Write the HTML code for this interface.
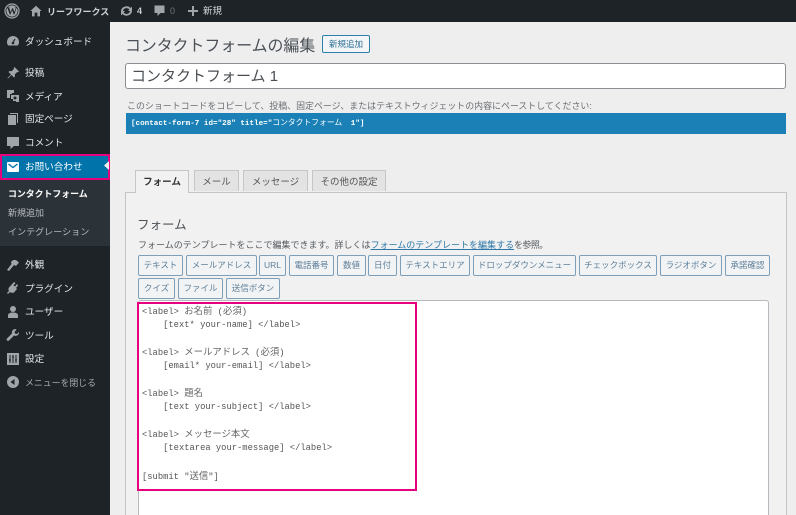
<!DOCTYPE html>
<html lang="ja">
<head>
<meta charset="utf-8">
<title>コンタクトフォームの編集</title>
<style>
html,body{margin:0;padding:0;width:796px;height:515px;overflow:hidden;background:#eeeeee;}
body{position:relative;font-family:"Liberation Sans","Noto Sans CJK JP",sans-serif;color:#444;}
#w{position:absolute;left:0;top:0;width:796px;height:515px;overflow:hidden;filter:blur(.3px);}
.a{position:absolute;white-space:nowrap;}
.m{position:absolute;left:25px;font-size:9.600px;line-height:14px;color:#e4e6e7;white-space:nowrap;}
.i{position:absolute;left:6px;width:14px;height:14px;}
.b{position:absolute;height:19px;border:1px solid #7d9fba;border-radius:2px;background:#f1f3f5;color:#5f7f99;font-size:8.500px;line-height:19px;text-align:center;white-space:nowrap;box-sizing:content-box;}
.t{position:absolute;top:170px;height:20px;border:1px solid #c6c6c6;border-bottom:none;background:#e3e3e3;color:#555;font-size:9.500px;line-height:23px;text-align:center;white-space:nowrap;}
.c{position:absolute;left:142px;font-family:"Liberation Mono","Noto Sans CJK JP",monospace;font-size:8.800px;line-height:14px;color:#555;white-space:pre;}
.c span{font-family:"Liberation Sans","Noto Sans CJK JP",sans-serif;font-size:9.400px;color:#666;}
</style>
</head>
<body>
<div id="w">
<!-- admin bar -->
<div class="a" style="left:0;top:0;width:796px;height:22px;background:#1d2327;"></div>
<svg class="a" style="left:4px;top:3px;" width="16" height="16" viewBox="0 0 16 16"><circle cx="8" cy="8" r="7" fill="none" stroke="#a0a5aa" stroke-width="1.200"/><circle cx="8" cy="8" r="5.600" fill="#a0a5aa"/><text x="8" y="11.600" text-anchor="middle" font-family="Liberation Serif" font-size="10.500" font-weight="700" fill="#1d2327">W</text></svg>
<svg class="a" style="left:30px;top:5px;" width="12" height="12" viewBox="0 0 12 12"><path d="M6 .8 11.600 6H10v5.400H7.400V7.600H4.600v3.800H2V6H.4z" fill="#a0a5aa"/></svg>
<div class="a" style="left:47px;top:5px;font-size:9px;line-height:14px;font-weight:700;color:#cfd2d4;">リーフワークス</div>
<svg class="a" style="left:120px;top:5px;" width="13" height="12" viewBox="0 0 13 12"><path d="M1 6a5.500 5 0 0 1 9.600-3L12 1.600V6H8l1.400-1.600A3.600 3.400 0 0 0 3 6zM12 6a5.500 5 0 0 1-9.600 3L1 10.400V6h4L3.600 7.600A3.600 3.400 0 0 0 10 6z" fill="#a0a5aa"/></svg>
<div class="a" style="left:137px;top:4px;font-size:9px;line-height:14px;font-weight:700;color:#c9cdd0;">4</div>
<svg class="a" style="left:154px;top:5px;" width="11" height="12" viewBox="0 0 11 12"><path d="M.5.5h10v7.500H6.500L3.500 11V8H.5z" fill="#a0a5aa"/></svg>
<div class="a" style="left:170px;top:4px;font-size:9px;line-height:14px;color:#6f7579;">0</div>
<svg class="a" style="left:188px;top:6px;" width="10" height="10" viewBox="0 0 10 10"><path d="M4 0h2v4h4v2H6v4H4V6H0V4h4z" fill="#a0a5aa"/></svg>
<div class="a" style="left:203px;top:5px;font-size:9.500px;line-height:13px;color:#cfd2d4;">新規</div>

<!-- sidebar -->
<div class="a" style="left:0;top:22px;width:110px;height:493px;background:#1d2327;"></div>
<div class="a" style="left:0;top:179px;width:110px;height:67px;background:#2c3338;"></div>
<div class="a" style="left:0;top:154px;width:110px;height:26px;background:#e6007e;"></div>
<div class="a" style="left:2px;top:156px;width:106px;height:22px;background:#0073aa;"></div>
<svg class="a" style="left:104px;top:161px;" width="5" height="9" viewBox="0 0 5 9"><path d="M5 0v9L0 4.500z" fill="#f0f0f1"/></svg>

<svg class="i" style="top:34px;" viewBox="0 0 14 14"><path d="M7 2a6 6 0 0 0-6 6c0 1.400.4 2.600 1.200 3.500h9.600A5.800 5.800 0 0 0 13 8a6 6 0 0 0-6-6z" fill="#a0a5aa"/><path d="M7 8.500 9 5" stroke="#1d2327" stroke-width="1.200"/><circle cx="7" cy="9" r="1.300" fill="#1d2327"/></svg>
<div class="m" style="top:36px;">ダッシュボード</div>
<svg class="i" style="top:66px;" viewBox="0 0 14 14"><path d="M8.500 1 13 5.500l-1 .8-.8-.3-2.400 2.400.2 2.100-1 1L5.500 9 2 12.500 1.500 12 5 8.500 2.500 6l1-1 2.100.2L8 2.800l-.3-.8z" fill="#a0a5aa"/></svg>
<div class="m" style="top:67px;">投稿</div>
<svg class="i" style="top:89px;" viewBox="0 0 14 14"><path d="M1 1h7v3H6v1H4v4H1zM5 6h8v7h-3v-1H7v-2H5z" fill="#a0a5aa"/><circle cx="9" cy="9" r="1.500" fill="#1d2327"/></svg>
<div class="m" style="top:91px;">メディア</div>
<svg class="i" style="top:112px;" viewBox="0 0 14 14"><path d="M4 1h8v10h-1V2H4z" fill="#a0a5aa"/><path d="M2 3h8v10H2z" fill="#a0a5aa"/></svg>
<div class="m" style="top:113px;">固定ページ</div>
<svg class="i" style="top:136px;" viewBox="0 0 14 14"><path d="M1 1h12v9H8l-3.500 3v-3H1z" fill="#a0a5aa"/></svg>
<div class="m" style="top:137px;">コメント</div>
<svg class="a" style="left:7px;top:162px;" width="12" height="10" viewBox="0 0 12 10"><rect x="0" y="0" width="12" height="10" rx="1" fill="#fff"/><path d="M1.500 2 6 5.500 10.500 2" fill="none" stroke="#0073aa" stroke-width="1.300"/></svg>
<div class="m" style="top:161px;color:#fff;">お問い合わせ</div>
<div class="m" style="left:8px;top:187px;font-size:8.900px;font-weight:700;color:#fff;">コンタクトフォーム</div>
<div class="m" style="left:8px;top:206px;font-size:9px;color:#b4b9be;">新規追加</div>
<div class="m" style="left:8px;top:225px;font-size:9.050px;color:#b4b9be;">インテグレーション</div>
<svg class="i" style="top:258px;" viewBox="0 0 14 14"><path d="M7 2h3l3 2.500L10 8 8 7 3 13l-2-1 4.500-6L5 4z" fill="#a0a5aa"/></svg>
<div class="m" style="top:259px;">外観</div>
<svg class="i" style="top:281px;" viewBox="0 0 14 14"><path d="M8 1l1.500 1-2 2.500 1.500 1L11 3l1 1.500L10 7l1 1-3 3.500c-1.500.7-3 .3-4-.5L2 13l-1-1 2-2c-.8-1-.8-2.500 0-3.500z" fill="#a0a5aa"/></svg>
<div class="m" style="top:283px;">プラグイン</div>
<svg class="i" style="top:305px;" viewBox="0 0 14 14"><circle cx="7" cy="4" r="3" fill="#a0a5aa"/><path d="M2 13v-2.500C2 8.500 4 7.500 7 7.500s5 1 5 3V13z" fill="#a0a5aa"/></svg>
<div class="m" style="top:306px;">ユーザー</div>
<svg class="i" style="top:328px;" viewBox="0 0 14 14"><path d="M9.500 1A3.500 3.500 0 0 0 6 5.500L1 10.500c-.6.800-.5 1.500 0 2s1.300.6 2 0l5-5A3.500 3.500 0 0 0 13 4l-2.200 2-1.800-.5L8.500 4l2-2.500z" fill="#a0a5aa"/></svg>
<div class="m" style="top:330px;">ツール</div>
<svg class="i" style="top:352px;" viewBox="0 0 14 14"><rect x="1" y="1" width="12" height="12" fill="#a0a5aa"/><path d="M4 3v8M3 8h2M7 3v8M6 5h2M10 3v8M9 8h2" stroke="#1d2327" stroke-width="1"/></svg>
<div class="m" style="top:353px;">設定</div>
<svg class="i" style="top:375px;" viewBox="0 0 14 14"><circle cx="7" cy="7" r="6" fill="#a0a5aa"/><path d="M8.500 4v6L4.500 7z" fill="#1d2327"/></svg>
<div class="m" style="top:376px;font-size:8.900px;color:#a7abaf;">メニューを閉じる</div>

<!-- heading -->
<div class="a" style="left:125px;top:36px;font-size:15.900px;line-height:22px;color:#4a5056;">コンタクトフォームの編集</div>
<div class="a" style="left:322px;top:35px;width:46px;height:16px;border:1px solid #2f7fab;border-radius:2px;background:#f3f5f6;color:#2a6f98;font-size:8.500px;line-height:17px;text-align:center;">新規追加</div>

<!-- title input -->
<div class="a" style="left:125px;top:63px;width:659px;height:24px;border:1px solid #8c8f94;border-radius:3px;background:#fff;"></div>
<div class="a" style="left:131px;top:66px;font-size:15px;line-height:22px;color:#4b4f54;">コンタクトフォーム 1</div>

<!-- shortcode -->
<div class="a" style="left:127px;top:99px;font-size:8.950px;line-height:14px;color:#6a6f74;">このショートコードをコピーして、投稿、固定ページ、またはテキストウィジェットの内容にペーストしてください:</div>
<div class="a" style="left:126px;top:113px;width:660px;height:21px;background:#1a80b6;"></div>
<div class="a" style="left:131px;top:118px;font-family:'Liberation Mono','Noto Sans CJK JP',monospace;font-size:7.600px;line-height:13px;font-weight:700;color:#fff;">[contact-form-7 id="28" title="<span style="font-weight:400;font-size:7.800px;margin-right:4px;">コンタクトフォーム</span> 1"]</div>

<!-- panel -->
<div class="a" style="left:125px;top:192px;width:660px;height:323px;border:1px solid #c3c4c7;border-bottom:none;background:#f1f1f1;"></div>
<div class="t" style="left:135px;width:52px;height:22px;background:#f1f1f1;color:#333;font-weight:700;z-index:2;">フォーム</div>
<div class="t" style="left:194px;width:43px;">メール</div>
<div class="t" style="left:243px;width:63px;">メッセージ</div>
<div class="t" style="left:312px;width:72px;">その他の設定</div>

<div class="a" style="left:137px;top:216px;font-size:12.500px;line-height:18px;color:#4c5257;">フォーム</div>
<div class="a" style="left:138px;top:238px;font-size:9px;line-height:14px;color:#555a5f;">フォームのテンプレートをここで編集できます。詳しくは<span style="color:#2d78a8;text-decoration:underline;">フォームのテンプレートを編集する</span><span style="letter-spacing:-.6px;">を参照。</span></div>

<div class="b" style="left:138px;top:255px;width:43px;">テキスト</div>
<div class="b" style="left:186px;top:255px;width:69px;">メールアドレス</div>
<div class="b" style="left:259px;top:255px;width:25px;">URL</div>
<div class="b" style="left:289px;top:255px;width:43px;">電話番号</div>
<div class="b" style="left:337px;top:255px;width:27px;">数値</div>
<div class="b" style="left:368px;top:255px;width:27px;">日付</div>
<div class="b" style="left:400px;top:255px;width:68px;">テキストエリア</div>
<div class="b" style="left:473px;top:255px;width:101px;">ドロップダウンメニュー</div>
<div class="b" style="left:579px;top:255px;width:76px;">チェックボックス</div>
<div class="b" style="left:660px;top:255px;width:60px;">ラジオボタン</div>
<div class="b" style="left:725px;top:255px;width:43px;">承諾確認</div>
<div class="b" style="left:138px;top:278px;width:35px;">クイズ</div>
<div class="b" style="left:178px;top:278px;width:43px;">ファイル</div>
<div class="b" style="left:226px;top:278px;width:52px;">送信ボタン</div>

<!-- textarea -->
<div class="a" style="left:138px;top:300px;width:629px;height:220px;border:1px solid #b5b8bc;border-radius:3px;background:#fff;"></div>
<div class="c" style="top:304px;">&lt;label&gt; <span>お名前</span> (<span>必須</span>)</div>
<div class="c" style="top:318px;">    [text* your-name] &lt;/label&gt;</div>
<div class="c" style="top:345px;">&lt;label&gt; <span>メールアドレス</span> (<span>必須</span>)</div>
<div class="c" style="top:359px;">    [email* your-email] &lt;/label&gt;</div>
<div class="c" style="top:386px;">&lt;label&gt; <span>題名</span></div>
<div class="c" style="top:400px;">    [text your-subject] &lt;/label&gt;</div>
<div class="c" style="top:427px;">&lt;label&gt; <span>メッセージ本文</span></div>
<div class="c" style="top:441px;">    [textarea your-message] &lt;/label&gt;</div>
<div class="c" style="top:469px;">[submit "<span>送信</span>"]</div>
<div class="a" style="left:137px;top:302px;width:276px;height:185px;border:2px solid #e6007e;"></div>
</div>
</body>
</html>
